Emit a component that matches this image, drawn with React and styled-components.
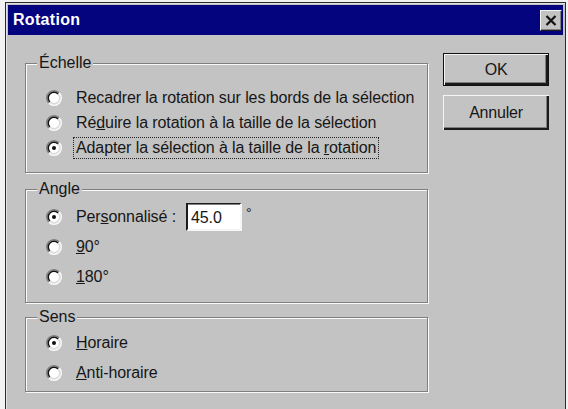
import React from 'react';
import styled, { createGlobalStyle } from 'styled-components';

const Global = createGlobalStyle`
  html, body {
    margin: 0;
    padding: 0;
    background: #f2f2f2;
  }
  body {
    font-family: "Liberation Sans", Arial, sans-serif;
    font-size: 16px;
    color: #161616;
  }
`;

// window frame
const Window = styled.div`
  box-sizing: border-box;
  margin: 2px 0 0 5px;
  width: 561px;
  height: 410px;
  padding: 2px;
  background: #c3c3c3;
  border: 1px solid #2a2a2a;
  border-bottom: none;
  box-shadow: inset 1px 1px 0 #e4e4e4;
`;

const TitleBar = styled.div`
  display: flex;
  align-items: center;
  justify-content: space-between;
  height: 30px;
  padding: 0 1px 0 5px;
  background: #04047f;
`;

const Title = styled.span`
  color: #fff;
  font-weight: bold;
  font-size: 16px;
  letter-spacing: 0.3px;
`;

const CloseButton = styled.div`
  box-sizing: border-box;
  display: flex;
  align-items: center;
  justify-content: center;
  width: 22px;
  height: 21px;
  background: #c3c3c3;
  border: 1px solid;
  border-color: #f4f4f4 #1a1a1a #1a1a1a #f4f4f4;
  box-shadow: inset -1px -1px 0 #7f7f7f;
`;

const Body = styled.div`
  display: flex;
  gap: 15px;
  padding: 18px 14px 0 17px;
`;

const Groups = styled.div`
  display: flex;
  flex-direction: column;
  width: 403px;
  margin-top: 10px;
`;

const Group = styled.div`
  position: relative;
  margin-top: ${p => p.gap || 0}px;
  padding: ${p => p.pad};
  border: 1px solid #7f7f7f;
  box-shadow: 1px 1px 0 #fafafa, inset 1px 1px 0 #fafafa;
`;

const Legend = styled.span`
  position: absolute;
  top: -10px;
  left: 11px;
  padding: 0 2px;
  line-height: 18px;
  background: #c3c3c3;
`;

const Row = styled.div`
  display: flex;
  align-items: center;
  height: ${p => p.h}px;
  padding-left: 20px;
  letter-spacing: -0.1px;
`;

const Label = styled.span`
  margin: 0 -2px 0 11px;
  padding: 1px 2px;
  border: 1px ${p => (p.focus ? 'dotted #222' : 'solid transparent')};
`;

const Key = styled.span`
  text-decoration: underline;
`;

const Field = styled.div`
  box-sizing: border-box;
  width: 56px;
  height: 28px;
  margin-left: 9px;
  padding: 3px 0 0 3px;
  background: #fff;
  border: 2px solid;
  border-color: #1c1c1c #f6f6f6 #f6f6f6 #1c1c1c;
  border-top-width: 1px;
  box-shadow: inset 0 1px 0 #7f7f7f;
  font-size: 16px;
  line-height: 22px;
`;

const Degree = styled.span`
  align-self: flex-start;
  margin: 3px 0 0 4px;
  font-size: 14px;
`;

const Buttons = styled.div`
  display: flex;
  flex-direction: column;
  gap: 9px;
  width: 106px;
`;

const Button = styled.div`
  box-sizing: border-box;
  display: flex;
  align-items: center;
  justify-content: center;
  height: ${p => (p.primary ? 33 : 35)}px;
  background: #c3c3c3;
  border: ${p => (p.primary ? '1px solid #111' : 'none')};
  box-shadow: inset 1px 1px 0 #f4f4f4, inset -2px -2px 0 #1a1a1a, inset -3px -3px 0 #7f7f7f;
  letter-spacing: -0.2px;
`;

const Radio = ({ checked }) => (
  <svg width="16" height="16" viewBox="0 0 16 16">
    <circle cx="8" cy="8" r="6.5" fill="#fff" />
    <path d="M2.87 13.13 A7.25 7.25 0 0 1 13.13 2.87" fill="none" stroke="#7f7f7f" strokeWidth="1.5" />
    <path d="M13.13 2.87 A7.25 7.25 0 0 1 2.87 13.13" fill="none" stroke="#fafafa" strokeWidth="1.5" />
    <path d="M3.93 12.07 A5.75 5.75 0 0 1 12.07 3.93" fill="none" stroke="#111" strokeWidth="1.5" />
    <path d="M12.07 3.93 A5.75 5.75 0 0 1 3.93 12.07" fill="none" stroke="#dcdcdc" strokeWidth="1.5" />
    {checked && <circle cx="8" cy="8" r="2" fill="#111" />}
  </svg>
);

const Option = ({ h, checked, focus, children, after }) => (
  <Row h={h}>
    <Radio checked={checked} />
    <Label focus={focus}>{children}</Label>
    {after}
  </Row>
);

export default function App() {
  return (
    <>
      <Global />
      <Window>
        <TitleBar>
          <Title>Rotation</Title>
          <CloseButton>
            <svg width="12" height="11" viewBox="0 0 12 11">
              <path d="M1.5 1 L10.5 10 M10.5 1 L1.5 10" stroke="#111" strokeWidth="2.2" />
            </svg>
          </CloseButton>
        </TitleBar>
        <Body>
          <Groups>
            <Group pad="21px 0 12px 0">
              <Legend>Échelle</Legend>
              <Option h={25}>Recadrer la rotation sur les bords de la sélection</Option>
              <Option h={25}>
                Ré<Key>d</Key>uire la rotation à la taille de la sélection
              </Option>
              <Option h={25} checked focus>
                Adapter la sélection à la taille de la <Key>r</Key>otation
              </Option>
            </Group>
            <Group gap={16} pad="12px 0 10px 0">
              <Legend>Angle</Legend>
              <Option
                h={30}
                checked
                after={
                  <>
                    <Field>45.0</Field>
                    <Degree>°</Degree>
                  </>
                }
              >
                Per<Key>s</Key>onnalisé :
              </Option>
              <Option h={30}>
                <Key>9</Key>0°
              </Option>
              <Option h={30}>
                <Key>1</Key>80°
              </Option>
            </Group>
            <Group gap={14} pad="10px 0 3px 0">
              <Legend>Sens</Legend>
              <Option h={30} checked>
                <Key>H</Key>oraire
              </Option>
              <Option h={30}>
                <Key>A</Key>nti-horaire
              </Option>
            </Group>
          </Groups>
          <Buttons>
            <Button primary>OK</Button>
            <Button>Annuler</Button>
          </Buttons>
        </Body>
      </Window>
    </>
  );
}
